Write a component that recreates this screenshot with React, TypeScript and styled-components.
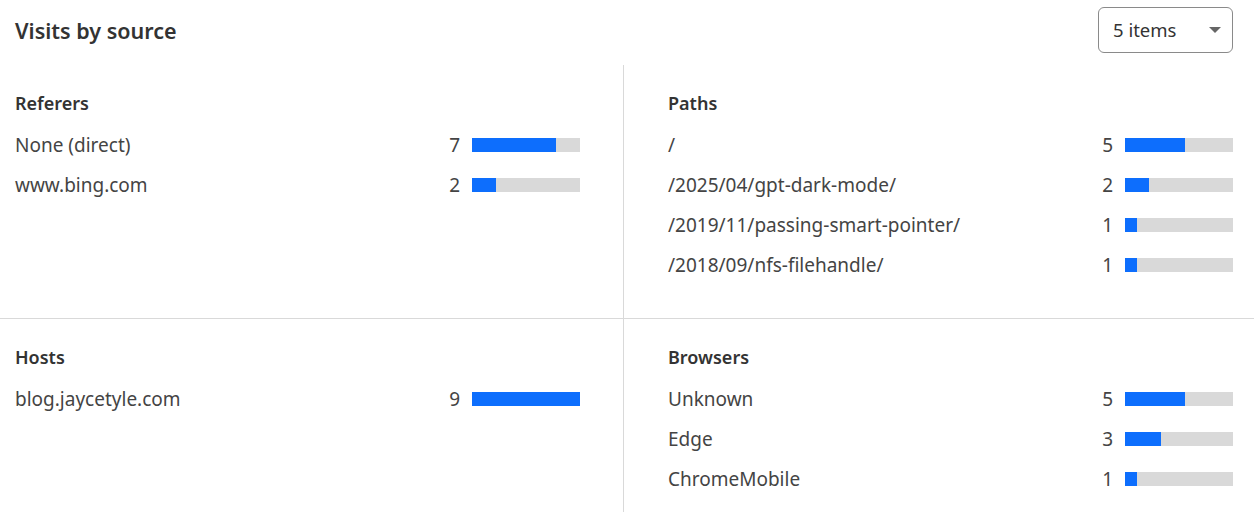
import React from 'react'
import styled, { createGlobalStyle } from 'styled-components'

const GlobalStyle = createGlobalStyle`
  html, body {
    margin: 0;
    padding: 0;
    background: #fff;
  }
  body {
    font-family: "Noto Sans", "Open Sans", sans-serif;
    color: #333;
    overflow: hidden;
  }
`

type Item = { label: string; count: number }
type Block = { title: string; items: Item[] }

const blocks: Block[] = [
  { title: 'Referers', items: [{ label: 'None (direct)', count: 7 }, { label: 'www.bing.com', count: 2 }] },
  {
    title: 'Paths',
    items: [
      { label: '/', count: 5 },
      { label: '/2025/04/gpt-dark-mode/', count: 2 },
      { label: '/2019/11/passing-smart-pointer/', count: 1 },
      { label: '/2018/09/nfs-filehandle/', count: 1 },
    ],
  },
  { title: 'Hosts', items: [{ label: 'blog.jaycetyle.com', count: 9 }] },
  {
    title: 'Browsers',
    items: [
      { label: 'Unknown', count: 5 },
      { label: 'Edge', count: 3 },
      { label: 'ChromeMobile', count: 1 },
    ],
  },
]

const App = () => {
  return (
    <Page>
      <GlobalStyle />
      <Header>
        <Title>Visits by source</Title>
        <Select>
          <span>5 items</span>
          <Caret />
        </Select>
      </Header>
      <Grid>
        {blocks.map((b, i) => {
          const total = b.items.reduce((s, it) => s + it.count, 0)
          return (
            <Cell key={b.title} side={i % 2 === 0 ? 'left' : 'right'} top={i < 2}>
              <CellTitle>{b.title}</CellTitle>
              {b.items.map((it) => (
                <Row key={it.label}>
                  <Label>{it.label}</Label>
                  <Count>{it.count}</Count>
                  <Bar>
                    <Fill style={{ width: `${(it.count / total) * 100}%` }} />
                  </Bar>
                </Row>
              ))}
            </Cell>
          )
        })}
      </Grid>
    </Page>
  )
}

export default App

const Page = styled.div`
  width: 1254px;
  height: 512px;
  overflow: hidden;
`
const Header = styled.div`
  height: 65px;
  display: flex;
  align-items: center;
  justify-content: space-between;
  padding: 0 21px 0 15px;
  box-sizing: border-box;
`
const Title = styled.h2`
  margin: 0;
  font-size: 21.5px;
  font-weight: 600;
  color: #333;
  margin-top: -4px;
`
const Select = styled.div`
  width: 135px;
  height: 46px;
  box-sizing: border-box;
  border: 1px solid #8a8a8a;
  border-radius: 6px;
  display: flex;
  align-items: center;
  justify-content: space-between;
  padding: 0 11px 0 14px;
  margin-top: -6px;
  font-size: 18.5px;
  color: #333;
`
const Caret = styled.div`
  width: 0;
  height: 0;
  border-left: 6px solid transparent;
  border-right: 6px solid transparent;
  border-top: 6px solid #666;
`
const Grid = styled.div`
  display: grid;
  grid-template-columns: 624px 630px;
  grid-template-rows: 254px 254px;
`
const Cell = styled.div<{ side: 'left' | 'right'; top: boolean }>`
  box-sizing: border-box;
  padding: ${({ side }) => (side === 'left' ? '25px 43px 0 15px' : '25px 21px 0 44px')};
  border-right: ${({ side }) => (side === 'left' ? '1px solid #d9d9d9' : 'none')};
  border-bottom: ${({ top }) => (top ? '1px solid #d9d9d9' : 'none')};
`
const CellTitle = styled.h3`
  margin: 0 0 9px;
  font-size: 18px;
  font-weight: 600;
  line-height: 26px;
  color: #333;
`
const Row = styled.div`
  display: flex;
  align-items: center;
  height: 40px;
`
const Label = styled.div`
  flex: 1;
  font-size: 19px;
  color: #444;
  white-space: nowrap;
`
const Count = styled.div`
  font-size: 19px;
  color: #444;
  text-align: right;
  margin-right: 12px;
`
const Bar = styled.div`
  width: 108px;
  height: 14px;
  background: #d9d9d9;
  display: flex;
`
const Fill = styled.div`
  height: 100%;
  background: #0d6efd;
`
